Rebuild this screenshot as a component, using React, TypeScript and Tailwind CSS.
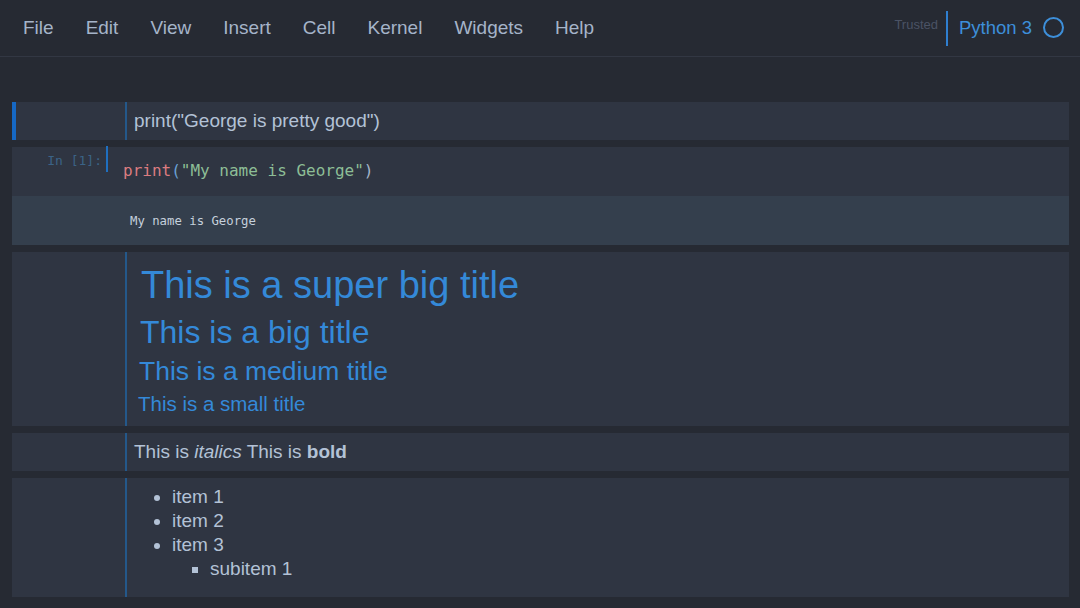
import React from 'react';

const menu = ['File', 'Edit', 'View', 'Insert', 'Cell', 'Kernel', 'Widgets', 'Help'];

const sans = "font-['Liberation_Sans',Arial,sans-serif]";
const mono = "font-['DejaVu_Sans_Mono',monospace]";

const MarkdownCell: React.FC<{ selected?: boolean; children: React.ReactNode; className?: string }> = ({
  selected,
  children,
  className = '',
}) => (
  <div className="flex bg-[#2f3542] ml-3 mr-[11px]">
    <div className={`w-[113px] shrink-0 ${selected ? 'border-l-4 border-[#1668c4]' : ''}`} />
    <div className={`flex-1 border-l-2 border-[#24588a] ${className}`}>{children}</div>
  </div>
);

export default function App() {
  return (
    <div className={`w-[1080px] h-[608px] bg-[#262a33] overflow-hidden ${sans}`}>
      {/* header */}
      <div className="h-[57px] flex items-start border-b border-[#323743] bg-[#262a33]">
        <nav className="flex pl-[7px] pt-[17px]">
          {menu.map((m) => (
            <span key={m} className="px-4 text-[19px] leading-[22px] text-[#a5b4c9]">
              {m}
            </span>
          ))}
        </nav>
        <div className="ml-auto flex items-start pt-[11px] pr-[16px]">
          <span className="text-[13px] leading-[16px] text-[#4b5365] mt-[6px] mr-[8px]">Trusted</span>
          <div className="w-[2px] h-[35px] bg-[#2f7fd0]" />
          <span className="ml-[11px] mt-[6px] text-[18.5px] leading-[22px] text-[#3d8fda]">Python 3</span>
          <div className="ml-[11px] mt-[6px] w-[21px] h-[21px] rounded-full border-2 border-[#3d8fda]" />
        </div>
      </div>

      <div className="pt-[45px] flex flex-col gap-[7px]">
        {/* cell 1 */}
        <MarkdownCell selected className="h-[38px] pl-[7px] flex items-center">
          <span className="text-[19px] text-[#b3c2d6]">print("George is pretty good")</span>
        </MarkdownCell>

        {/* code cell */}
        <div className="ml-3 mr-[11px] bg-[#2f3542]">
          <div className="flex h-[49px]">
            <div className="w-[94px] shrink-0 flex justify-end pt-[5px] pr-[4px]">
              <span className={`${mono} text-[13px] leading-[18px] text-[#3b6386]`}>In [1]:</span>
            </div>
            <div className="w-[2px] h-[26px] -mt-[1px] bg-[#1f6fc0]" />
            <div className={`${mono} text-[16px] leading-[20px] pl-[15px] pt-[14px]`}>
              <span className="text-[#db7c80]">print</span>
              <span className="text-[#6aa1d6]">(</span>
              <span className="text-[#8dbe96]">"My name is George"</span>
              <span className="text-[#a5b4c9]">)</span>
            </div>
          </div>
          <div className="h-[49px] bg-[#343f4d] pl-[118px] pt-[12px]">
            <span className={`${mono} text-[12.3px] leading-[16px] text-[#c5d0dc]`}>My name is George</span>
          </div>
        </div>

        {/* titles */}
        <MarkdownCell className="h-[174px] text-[#3489d8] pt-[12px]">
          <div className="pl-[14px] text-[38px] leading-[42px]">This is a super big title</div>
          <div className="pl-[13px] text-[32px] leading-[36px] mt-[8px]">This is a big title</div>
          <div className="pl-[12px] text-[26.5px] leading-[30px] mt-[6px]">This is a medium title</div>
          <div className="pl-[11px] text-[20.5px] leading-[24px] mt-[6px]">This is a small title</div>
        </MarkdownCell>

        {/* italics / bold */}
        <MarkdownCell className="h-[38px] pl-[7px] flex items-center">
          <span className="text-[19px] text-[#b3c2d6]">
            This is <i>italics</i> This is <b>bold</b>
          </span>
        </MarkdownCell>

        {/* list */}
        <MarkdownCell className="h-[119px] pt-[7px]">
          <ul className="list-disc pl-[45px] text-[19px] leading-[24px] text-[#b3c2d6] marker:text-[#b3c2d6]">
            <li>item 1</li>
            <li>item 2</li>
            <li>
              item 3
              <ul className="list-[square] pl-[38px]">
                <li>subitem 1</li>
              </ul>
            </li>
          </ul>
        </MarkdownCell>
      </div>
    </div>
  );
}
